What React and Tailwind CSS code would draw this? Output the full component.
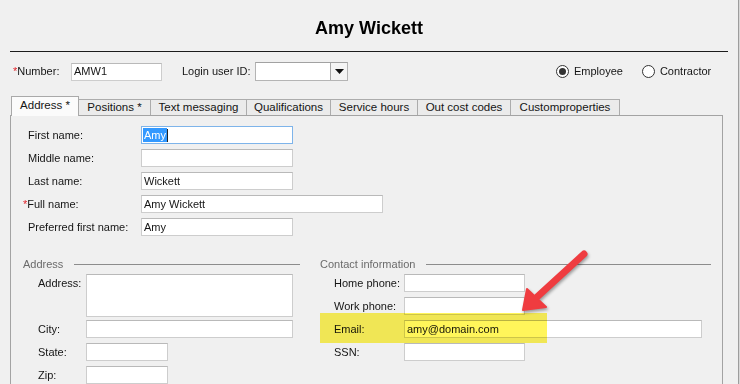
import React from "react";

function Box({ w, h = 18, children, className = "" }) {
  return (
    <div
      className={`shrink-0 bg-white border border-[#cdcdcd] border-t-[#b9b9b9] flex items-center px-[2px] text-[11px] leading-none ${className}`}
      style={{ width: w, height: h }}
    >
      {children}
    </div>
  );
}

function Row({ label, labelW, w, children, star, h = 18, boxClass = "" }) {
  return (
    <div className="flex items-start shrink-0">
      <div className="shrink-0 h-[18px] leading-[18px] whitespace-nowrap" style={{ width: labelW }}>
        {star && <span className="-ml-[5px] text-[#e0242b]">*</span>}
        {label}
      </div>
      <Box w={w} h={h} className={boxClass}>
        {children}
      </Box>
    </div>
  );
}

const tabs = [
  ["Positions *", 72],
  ["Text messaging", 96],
  ["Qualifications", 84],
  ["Service hours", 87],
  ["Out cost codes", 93],
  ["Customproperties", 109],
];

export default function App() {
  return (
    <div className="w-[740px] h-[384px] overflow-hidden bg-[#f0f0f0] relative flex font-['Liberation_Sans',Arial,sans-serif] text-[11px] text-[#151515]">
      <div className="w-[738px] flex flex-col shrink-0">
        {/* Title */}
        <div className="shrink-0 h-[51px] pt-[5px] flex items-center justify-center text-[18px] font-bold text-black">
          Amy Wickett
        </div>
        <div className="shrink-0 mx-[10px] h-px bg-[#1c1c1c]" />

        {/* Number row */}
        <div className="shrink-0 mt-[10px] h-[19px] flex items-center">
          <div className="w-[71px] pl-[13px] whitespace-nowrap">
            <span className="text-[#e0242b]">*</span>Number:
          </div>
          <Box w={91} h={18}>AMW1</Box>
          <div className="ml-[20px] w-[73px] whitespace-nowrap">Login user ID:</div>
          <div className="w-[93px] h-[19px] bg-white border border-[#b4b4b4] border-t-[#a2a2a2] flex justify-end">
            <div className="w-[17px] h-full border-l border-[#a8a8a8] bg-[#f4f4f4] flex items-center justify-center">
              <svg width="9" height="5" viewBox="0 0 9 5">
                <path d="M0 0 H9 L4.5 5 Z" fill="#111" />
              </svg>
            </div>
          </div>
          <div className="ml-[208px] flex items-center">
            <div className="w-[13px] h-[13px] rounded-full border border-[#333] bg-white flex items-center justify-center">
              <div className="w-[7px] h-[7px] rounded-full bg-[#333]" />
            </div>
            <span className="ml-[5px]">Employee</span>
            <div className="ml-[19px] w-[13px] h-[13px] rounded-full border border-[#333] bg-white" />
            <span className="ml-[5px]">Contractor</span>
          </div>
        </div>

        {/* Tabs */}
        <div className="shrink-0 mt-[15px] h-[19px] pl-[11px] flex items-end relative z-10">
          <div className="w-[68px] h-[20px] -mb-px bg-[#fbfbfb] border border-b-0 border-[#a9a9a9] flex items-center justify-center text-[11.5px] pb-[2px]">
            Address *
          </div>
          {tabs.map(([t, w]) => (
            <div
              key={t}
              className="h-[16px] border border-l-0 border-b-0 border-[#acacac] bg-[#ebebeb] flex items-center justify-center text-[11.5px] whitespace-nowrap"
              style={{ width: w }}
            >
              {t}
            </div>
          ))}
        </div>

        {/* Panel */}
        <div className="ml-[10px] w-[713px] h-[300px] border border-[#a3a3a3] bg-[#f0f0f0] pt-[10px] pl-[17px] shrink-0">
          <div className="flex flex-col gap-[5px]">
            <div className="flex items-start">
              <div className="w-[113px] h-[18px] leading-[18px]">First name:</div>
              <div className="w-[152px] h-[18px] bg-white border border-[#7eb4ea] flex items-center px-[1px]">
                <span className="bg-[#3399ff] text-white px-[1px] leading-[14px]">Amy</span>
                <span className="w-px h-[13px] bg-[#222]" />
              </div>
            </div>
            <Row label="Middle name:" labelW={113} w={152} />
            <Row label="Last name:" labelW={113} w={152}>Wickett</Row>
            <Row label="Full name:" labelW={113} w={242} star>Amy Wickett</Row>
            <Row label="Preferred first name:" labelW={113} w={152}>Amy</Row>
          </div>

          <div className="mt-[21px] -ml-[5px] flex gap-[20px]">
            {/* Address group */}
            <div className="w-[277px]">
              <div className="h-[14px] flex items-center">
                <span className="text-[#6b6b6b]">Address</span>
                <div className="flex-1 ml-[11px] h-px bg-[#8c8c8c]" />
              </div>
              <div className="mt-[3px] pl-[15px] flex flex-col gap-[5px]">
                <div className="-mb-[2px]">
                  <Row label="Address:" labelW={48} w={207} h={43} />
                </div>
                <Row label="City:" labelW={48} w={207} />
                <Row label="State:" labelW={48} w={82} />
                <Row label="Zip:" labelW={48} w={82} />
              </div>
            </div>

            {/* Contact group */}
            <div className="w-[391px]">
              <div className="h-[14px] flex items-center">
                <span className="text-[#6b6b6b] whitespace-nowrap">Contact information</span>
                <div className="flex-1 ml-[11px] h-px bg-[#8c8c8c]" />
              </div>
              <div className="mt-[3px] pl-[14px] flex flex-col gap-[5px]">
                <Row label="Home phone:" labelW={70} w={121} />
                <Row label="Work phone:" labelW={70} w={121} />
                <Row label="Email:" labelW={70} w={298}>amy@domain.com</Row>
                <Row label="SSN:" labelW={70} w={121} />
              </div>
            </div>
          </div>
        </div>
      </div>
      <div className="w-[2px] h-full border-l border-[#9d9d9d] bg-[#d8d8d8]" />

      {/* Yellow highlight */}
      <div className="absolute left-[320px] top-[313px] w-[227px] h-[30px] bg-[#fff55a] mix-blend-multiply pointer-events-none" />

      {/* Red arrow */}
      <svg
        className="absolute left-[505px] top-[245px] drop-shadow-[1px_2px_1.5px_rgba(0,0,0,0.35)]"
        width="95"
        height="75"
        viewBox="0 0 95 75"
      >
        <line x1="79" y1="9" x2="32" y2="52" stroke="#ef3c40" strokeWidth="7" strokeLinecap="round" />
        <polygon points="18,65 22,44 41,62" fill="#ef3c40" stroke="#ef3c40" strokeWidth="2" strokeLinejoin="round" />
      </svg>
    </div>
  );
}
